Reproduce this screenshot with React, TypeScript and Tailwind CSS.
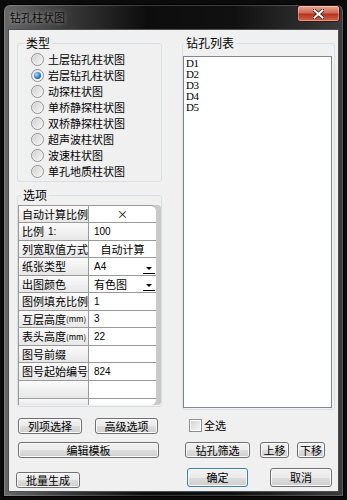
import React from "react";

const cjk = "font-['Noto_Sans_CJK_SC',sans-serif]";

function Btn({ children, className = "" }: { children: React.ReactNode; className?: string }) {
  return (
    <div
      className={`flex items-center justify-center rounded-[3px] border border-[#707070] bg-[linear-gradient(#f2f2f2_0%,#ebebeb_50%,#dddddd_51%,#cfcfcf_100%)] shadow-[inset_0_0_0_1px_#fbfbfb] text-[11px] leading-none text-black ${className}`}
    >
      {children}
    </div>
  );
}

function Radio({ checked }: { checked?: boolean }) {
  return (
    <div className="w-[13px] h-[13px] rounded-full border border-[#8e8f8f] bg-[linear-gradient(135deg,#e2e2e2,#ffffff)] flex items-center justify-center shrink-0">
      {checked ? (
        <div className="w-[7px] h-[7px] rounded-full bg-[radial-gradient(circle_at_35%_35%,#a8dcff,#2a7fd4_55%,#0b3f8a)]" />
      ) : (
        <div className="w-[9px] h-[9px] rounded-full bg-[linear-gradient(135deg,#cfcfcf,#f7f7f7)]" />
      )}
    </div>
  );
}

const radios = [
  "土层钻孔柱状图",
  "岩层钻孔柱状图",
  "动探柱状图",
  "单桥静探柱状图",
  "双桥静探柱状图",
  "超声波柱状图",
  "波速柱状图",
  "单孔地质柱状图",
];

type Row = { k: React.ReactNode; v: React.ReactNode; center?: boolean; dd?: boolean; num?: boolean; h: string };

const mm = <span className="text-[8px]">(mm)</span>;

const rows: Row[] = [
  { k: "自动计算比例", v: "×", center: true, h: "h-[17px]" },
  { k: <>比例<span className="ml-[4px] font-['Liberation_Sans',sans-serif] text-[10px]">1:</span></>, v: "100", num: true, h: "h-[18px]" },
  { k: "列宽取值方式", v: "自动计算", center: true, h: "h-[17px]" },
  { k: "纸张类型", v: "A4", dd: true, num: true, h: "h-[18px]" },
  { k: "出图颜色", v: "有色图", dd: true, h: "h-[17px]" },
  { k: "图例填充比例", v: "1", num: true, h: "h-[18px]" },
  { k: <>互层高度{mm}</>, v: "3", num: true, h: "h-[17px]" },
  { k: <>表头高度{mm}</>, v: "22", num: true, h: "h-[18px]" },
  { k: "图号前缀", v: "", h: "h-[17px]" },
  { k: "图号起始编号", v: "824", num: true, h: "h-[18px]" },
  { k: "", v: "", h: "h-[18px]" },
];

export default function App() {
  return (
    <div className={`w-[347px] h-[500px] bg-[#0b0b0b] pt-[4px] px-[3px] ${cjk}`}>
      <div className="w-[341px] h-[493px] rounded-t-[7px] border border-black bg-[linear-gradient(90deg,#686868_0%,#3a3a3a_18%,#0d0d0d_42%,#111111_68%,#3c3c3c_100%)] shadow-[inset_0_0_0_1px_rgba(255,255,255,0.18)] flex flex-col">
        {/* title bar */}
        <div className="h-[25px] flex items-start justify-between">
          <div className="mt-[6px] ml-[6px] text-[11px] leading-[12px] text-[#0a0a0a] [text-shadow:0_0_4px_rgba(255,255,255,0.55)]">
            钻孔柱状图
          </div>
          <div className="mr-[3px] w-[43px] h-[17px] rounded-[3px] border border-[#3a1a14] bg-[linear-gradient(#e9a595_0%,#d26a55_45%,#b8321c_55%,#d0674a_100%)] shadow-[inset_0_0_0_1px_rgba(255,255,255,0.35)] flex items-center justify-center">
            <svg width="11" height="10" viewBox="0 0 11 10">
              <path d="M1.5 1.5 L9.5 8.5 M9.5 1.5 L1.5 8.5" stroke="#3b1a12" strokeWidth="3.6" strokeLinecap="square" />
              <path d="M1.5 1.5 L9.5 8.5 M9.5 1.5 L1.5 8.5" stroke="#ffffff" strokeWidth="2" strokeLinecap="square" />
            </svg>
          </div>
        </div>
        {/* client */}
        <div className="px-[5px]">
          <div className="w-[329px] h-[461px] bg-[#f0f0f0] shadow-[0_0_0_1px_#4c4f55] flex text-black">
            {/* left column */}
            <div className="ml-[8px] w-[145px] flex flex-col">
              <div className="relative mt-[13px] h-[139px] border border-[#d5dfe5] rounded-[3px] pt-[7px] pl-[13px]">
                <span className="absolute -top-[7px] left-[6px] px-[2px] bg-[#f0f0f0] text-[12px] leading-[12px]">类型</span>
                {radios.map((r, i) => (
                  <div key={r} className="h-[16px] flex items-center gap-[4px]">
                    <Radio checked={i === 1} />
                    <span className="text-[11px] leading-[12px] whitespace-nowrap">{r}</span>
                  </div>
                ))}
              </div>
              <div className="relative mt-[13px] h-[212px] border border-[#d5dfe5] rounded-[3px] pt-[9px]">
                <span className="absolute -top-[7px] left-[3px] px-[2px] bg-[#f0f0f0] text-[12px] leading-[12px]">选项</span>
                <div className="flex h-[200px] bg-[#c9c9c9] rounded-r-[4px]">
                  <div className="w-[138px] h-[200px] flex flex-col border-l border-t border-[#9a9a9a] bg-white rounded-tr-[5px] rounded-br-[5px] overflow-hidden">
                    {rows.map((r, i) => (
                      <div key={i} className={`flex shrink-0 border-b border-[#9a9a9a] ${r.h}`}>
                        <div className="w-[70px] shrink-0 border-r border-[#9a9a9a] bg-[linear-gradient(#fbfbfb,#e7e7e7)] flex items-center pl-[3px] text-[11px] leading-none whitespace-nowrap">
                          {r.k}
                        </div>
                        <div className={`flex-1 flex items-center min-w-0 ${r.center ? "justify-center" : "pl-[5px]"}`}>
                          <span className={r.num ? "font-['Liberation_Sans',sans-serif] text-[10px] leading-none flex-1" : r.center ? "text-[11px] leading-none" : "text-[11px] leading-none flex-1"}>
                            {r.v}
                          </span>
                          {r.dd && (
                            <div className="w-[12px] h-full mr-[1px] flex flex-col items-center justify-end">
                              <div className="w-0 h-0 border-l-[3px] border-r-[3px] border-t-[3px] border-l-transparent border-r-transparent border-t-black mb-[3px]" />
                              <div className="w-[12px] h-[1px] bg-black mb-[1px]" />
                            </div>
                          )}
                        </div>
                      </div>
                    ))}
                    <div className="flex flex-1">
                      <div className="w-[70px] shrink-0 border-r border-[#9a9a9a] bg-[linear-gradient(#fbfbfb,#e7e7e7)]" />
                      <div className="flex-1" />
                    </div>
                  </div>
                </div>
              </div>
              <div className="mt-[11px] flex">
                <Btn className="ml-[1px] w-[64px] h-[16px]">列项选择</Btn>
                <Btn className="ml-[13px] w-[63px] h-[16px]">高级选项</Btn>
              </div>
              <Btn className="mt-[8px] ml-[1px] w-[141px] h-[16px]">编辑模板</Btn>
              <Btn className="mt-[14px] -ml-[1px] w-[64px] h-[16px]">批量生成</Btn>
            </div>
            {/* right column */}
            <div className="ml-[20px] w-[153px] flex flex-col">
              <div className="relative mt-[13px] h-[367px] border border-[#d5dfe5] rounded-[3px] pt-[12px] pr-[2px]">
                <span className="absolute -top-[7px] left-[1px] px-[2px] bg-[#f0f0f0] text-[12px] leading-[12px]">钻孔列表</span>
                <div className="h-[352px] border border-[#828790] bg-white pt-[1px] pl-[2px] font-['Liberation_Serif',serif] text-[11px] leading-[11px] tracking-[-0.5px] text-black">
                  {["D1", "D2", "D3", "D4", "D5"].map((d) => (
                    <div key={d} className="h-[11px]">{d}</div>
                  ))}
                </div>
              </div>
              <div className="mt-[9px] ml-[7px] flex items-center gap-[2px] h-[13px]">
                <div className="w-[13px] h-[13px] border border-[#8e8f8f] bg-white flex items-center justify-center">
                  <div className="w-[9px] h-[9px] bg-[linear-gradient(135deg,#d2d2d2,#f8f8f8)]" />
                </div>
                <span className="text-[11px] leading-none">全选</span>
              </div>
              <div className="mt-[10px] flex">
                <Btn className="ml-[3px] w-[65px] h-[16px]">钻孔筛选</Btn>
                <Btn className="ml-[10px] w-[29px] h-[16px]">上移</Btn>
                <Btn className="ml-[8px] w-[28px] h-[16px]">下移</Btn>
              </div>
              <div className="mt-[10px] flex">
                <Btn className="ml-[5px] w-[61px] h-[19px] !border-[#3c7fb1] shadow-[inset_0_0_0_1px_#bfe3f7]">确定</Btn>
                <Btn className="ml-[22px] w-[62px] h-[19px]">取消</Btn>
              </div>
            </div>
          </div>
        </div>
      </div>
    </div>
  );
}
